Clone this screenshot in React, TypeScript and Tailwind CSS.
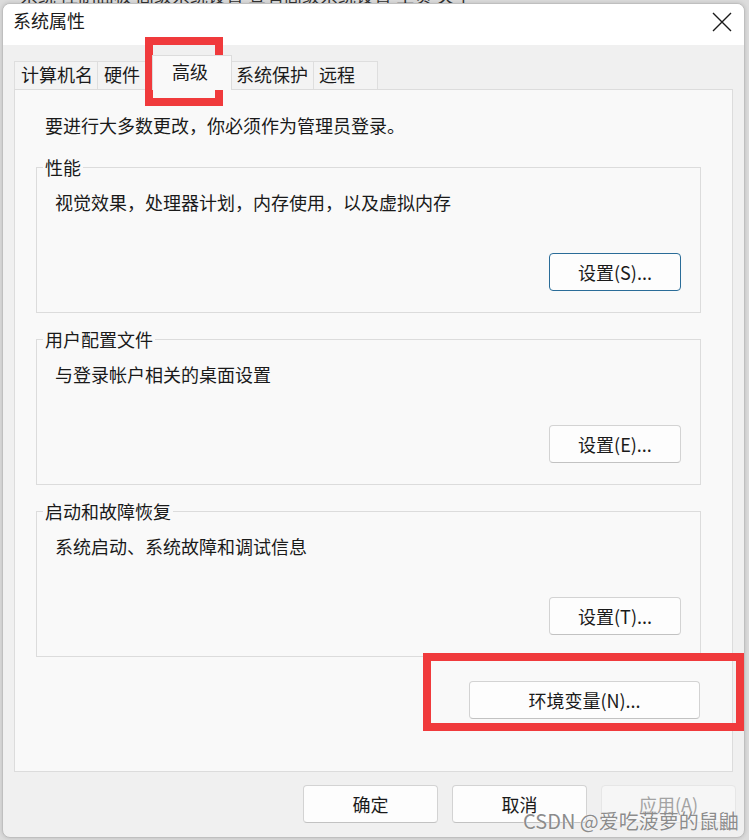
import React from "react";

const FONT = { fontFamily: '"Noto Sans CJK SC", "Noto Sans", sans-serif' };

function Btn({
  children,
  w = "w-[132px]",
  focused = false,
  disabled = false,
}: {
  children: React.ReactNode;
  w?: string;
  focused?: boolean;
  disabled?: boolean;
}) {
  return (
    <div
      className={
        "h-[38px] flex items-center justify-center rounded-[4px] text-[18px] leading-none " +
        w +
        " " +
        (focused
          ? "border border-[#2a6c98] bg-[#fdfdfd] text-[#1a1a1a]"
          : disabled
          ? "border border-[#e6e6e6] bg-[#f6f6f6] text-[#a3a3a3]"
          : "border border-[#d3d3d3] border-b-[#c2c2c2] bg-[#fdfdfd] text-[#1a1a1a]")
      }
    >
      {children}
    </div>
  );
}

function Group({
  title,
  text,
  button,
  focused = false,
}: {
  title: string;
  text: string;
  button: string;
  focused?: boolean;
}) {
  return (
    <fieldset className="border border-[#dcdcdc] h-[158px]">
      <legend className="ml-[6px] px-[2px] text-[18px] leading-[24px] text-[#1a1a1a]">
        {title}
      </legend>
      <div className="h-[133px] flex flex-col justify-between pt-[11px] pb-[21px] pl-[18px] pr-[19px]">
        <div className="text-[18px] leading-[24px] text-[#1a1a1a]">{text}</div>
        <div className="flex justify-end">
          <Btn focused={focused}>{button}</Btn>
        </div>
      </div>
    </fieldset>
  );
}

export default function App() {
  return (
    <div
      className="w-[749px] h-[840px] bg-[#dcdcdc] relative overflow-hidden pt-[3px] pl-[2px]"
      style={FONT}
    >
      {/* content behind window (top strip) */}
      <div className="absolute left-[20px] top-[-14px] text-[18px] leading-[18px] text-[#333] whitespace-nowrap">
        系统 控制面板 高级系统设置 查看高级系统设置 主页 关于
      </div>

      <div className="relative w-[743px] h-[835px] rounded-[8px] border border-[#bfbfbf] bg-[#f0f0f0] overflow-hidden flex flex-col shadow-[0_0_4px_rgba(0,0,0,0.15)]">
        {/* Title bar */}
        <div className="h-[41px] bg-white flex items-start justify-between pl-[10px] pr-[12px] pt-[4px]">
          <div className="text-[18px] leading-[24px] text-[#1a1a1a]">系统属性</div>
          <svg width="20" height="20" viewBox="0 0 20 20" className="mt-[4px]">
            <path d="M1 1 L19 19 M19 1 L1 19" stroke="#1a1a1a" strokeWidth="1.4" fill="none" />
          </svg>
        </div>

        {/* Tabs */}
        <div className="mt-[10px] mx-[11px] flex items-end h-[34px] text-[18px] text-[#1a1a1a]">
          <div className="w-[84px] h-[28px] border border-b-0 border-[#dedede] bg-[#f3f3f3] pl-[6px] leading-[24px]">
            计算机名
          </div>
          <div className="w-[54px] h-[28px] border border-b-0 border-l-0 border-[#dedede] bg-[#f3f3f3] pl-[6px] leading-[24px]">
            硬件
          </div>
          <div className="relative z-10 w-[80px] h-[35px] mb-[-1px] border border-b-0 border-[#dcdcdc] bg-[#f9f9f9] pl-[19px] pt-[3px] leading-[24px]">
            高级
          </div>
          <div className="w-[82px] h-[28px] border border-b-0 border-l-0 border-[#dedede] bg-[#f3f3f3] pl-[4px] leading-[24px]">
            系统保护
          </div>
          <div className="w-[64px] h-[28px] border border-b-0 border-l-0 border-[#dedede] bg-[#f3f3f3] pl-[5px] leading-[24px]">
            远程
          </div>
        </div>

        {/* Panel */}
        <div className="mx-[11px] h-[683px] border border-[#dcdcdc] bg-[#f9f9f9] pl-[21px] pr-[31px] pt-[23px] flex flex-col">
          <div className="ml-[9px] text-[18px] leading-[24px] text-[#1a1a1a]">
            要进行大多数更改，你必须作为管理员登录。
          </div>
          <div className="mt-[18px] flex flex-col gap-[14px]">
            <Group
              title="性能"
              text="视觉效果，处理器计划，内存使用，以及虚拟内存"
              button="设置(S)..."
              focused
            />
            <Group title="用户配置文件" text="与登录帐户相关的桌面设置" button="设置(E)..." />
            <Group title="启动和故障恢复" text="系统启动、系统故障和调试信息" button="设置(T)..." />
          </div>
          <div className="mt-[24px] flex justify-end pr-[1px]">
            <Btn w="w-[231px]">环境变量(N)...</Btn>
          </div>
        </div>

        {/* Bottom buttons */}
        <div className="mt-[13px] flex justify-end gap-[14px] pr-[8px]">
          <Btn w="w-[135px]">确定</Btn>
          <Btn w="w-[135px]">取消</Btn>
          <Btn w="w-[135px]" disabled>
            应用(A)
          </Btn>
        </div>
      </div>

      {/* Red highlight boxes (annotations) */}
      <div className="absolute left-[145px] top-[37px] w-[78px] h-[69px] border-[8px] border-[#f03a3c]" />
      <div className="absolute left-[423px] top-[653px] w-[321px] h-[78px] border-[8px] border-[#f03a3c]" />

      {/* Watermark */}
      <div
        className="absolute left-[523px] top-[808px] text-[20px] leading-[26px] text-[#8c8c8c] whitespace-nowrap"
        style={{ textShadow: "0 0 1px #fff, 0 0 1px #fff" }}
      >
        CSDN @爱吃菠萝的鼠鼬
      </div>
    </div>
  );
}
